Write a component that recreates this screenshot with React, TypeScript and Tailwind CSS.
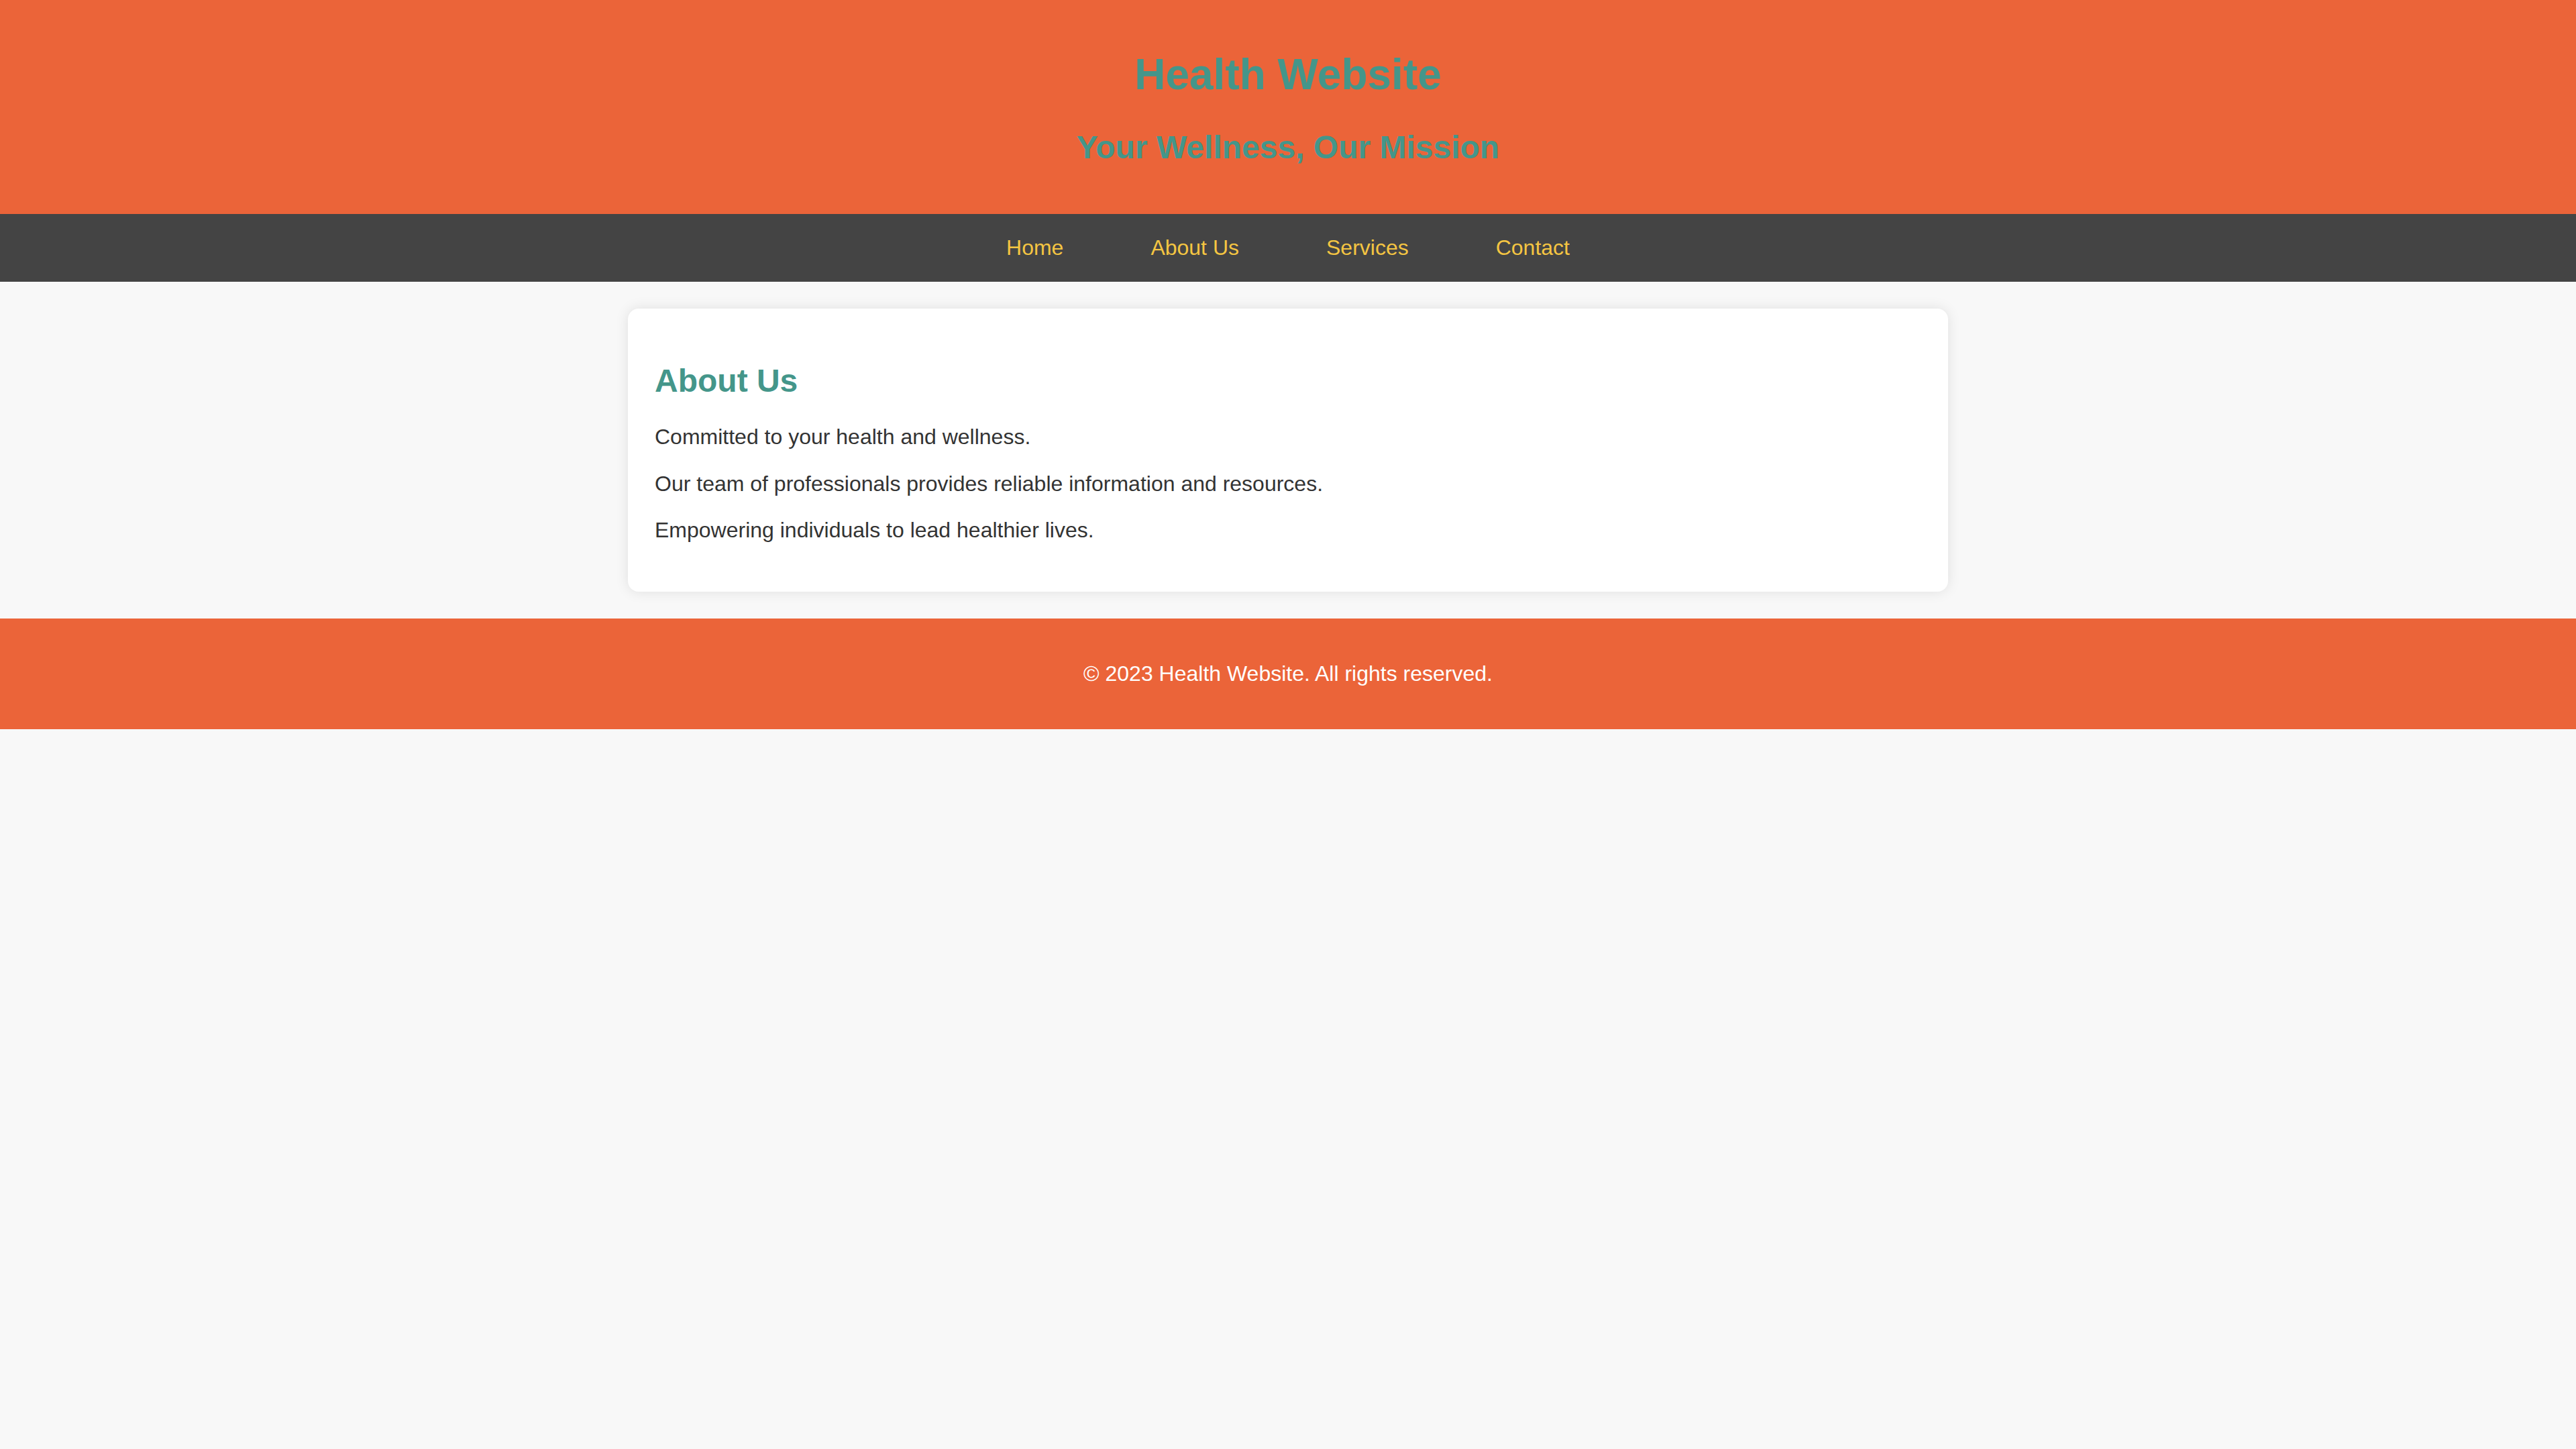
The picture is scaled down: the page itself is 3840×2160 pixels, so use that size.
import React from 'react';

const links = ['Home', 'About Us', 'Services', 'Contact'];

const App = () => {
  return (
    <div className="min-h-screen bg-[#f8f8f8] text-[#333333] font-['Liberation_Sans',Arial,sans-serif] text-[32px] leading-[1.15]">
      {/* Header */}
      <header className="bg-[#eb6439] text-center py-[32px]">
        <h1 className="text-[64px] font-bold text-[#44968a] my-[43px] leading-[1.15]">Health Website</h1>
        <h2 className="text-[48px] font-bold text-[#44968a] my-[40px] leading-[1.15]">Your Wellness, Our Mission</h2>
      </header>

      {/* Nav */}
      <nav className="bg-[#444444] py-[32px] flex justify-center gap-[130px]">
        {links.map((l) => (
          <a key={l} href="#" className="text-[#f4c542]">{l}</a>
        ))}
      </nav>

      {/* Main */}
      <main className="py-[40px]">
        <section className="w-[1968px] mx-auto bg-white rounded-[16px] px-[40px] py-[40px] shadow-[0_0_20px_rgba(0,0,0,0.1)]">
          <h2 className="text-[48px] font-bold text-[#44968a] mt-[40px] mb-[38px] leading-[1.15]">About Us</h2>
          <p className="my-[33px]">Committed to your health and wellness.</p>
          <p className="my-[33px]">Our team of professionals provides reliable information and resources.</p>
          <p className="my-[33px]">Empowering individuals to lead healthier lives.</p>
        </section>
      </main>

      {/* Footer */}
      <footer className="bg-[#eb6439] text-white text-center py-[32px]">
        <p className="my-[32px]">© 2023 Health Website. All rights reserved.</p>
      </footer>
    </div>
  );
};

export default App;
